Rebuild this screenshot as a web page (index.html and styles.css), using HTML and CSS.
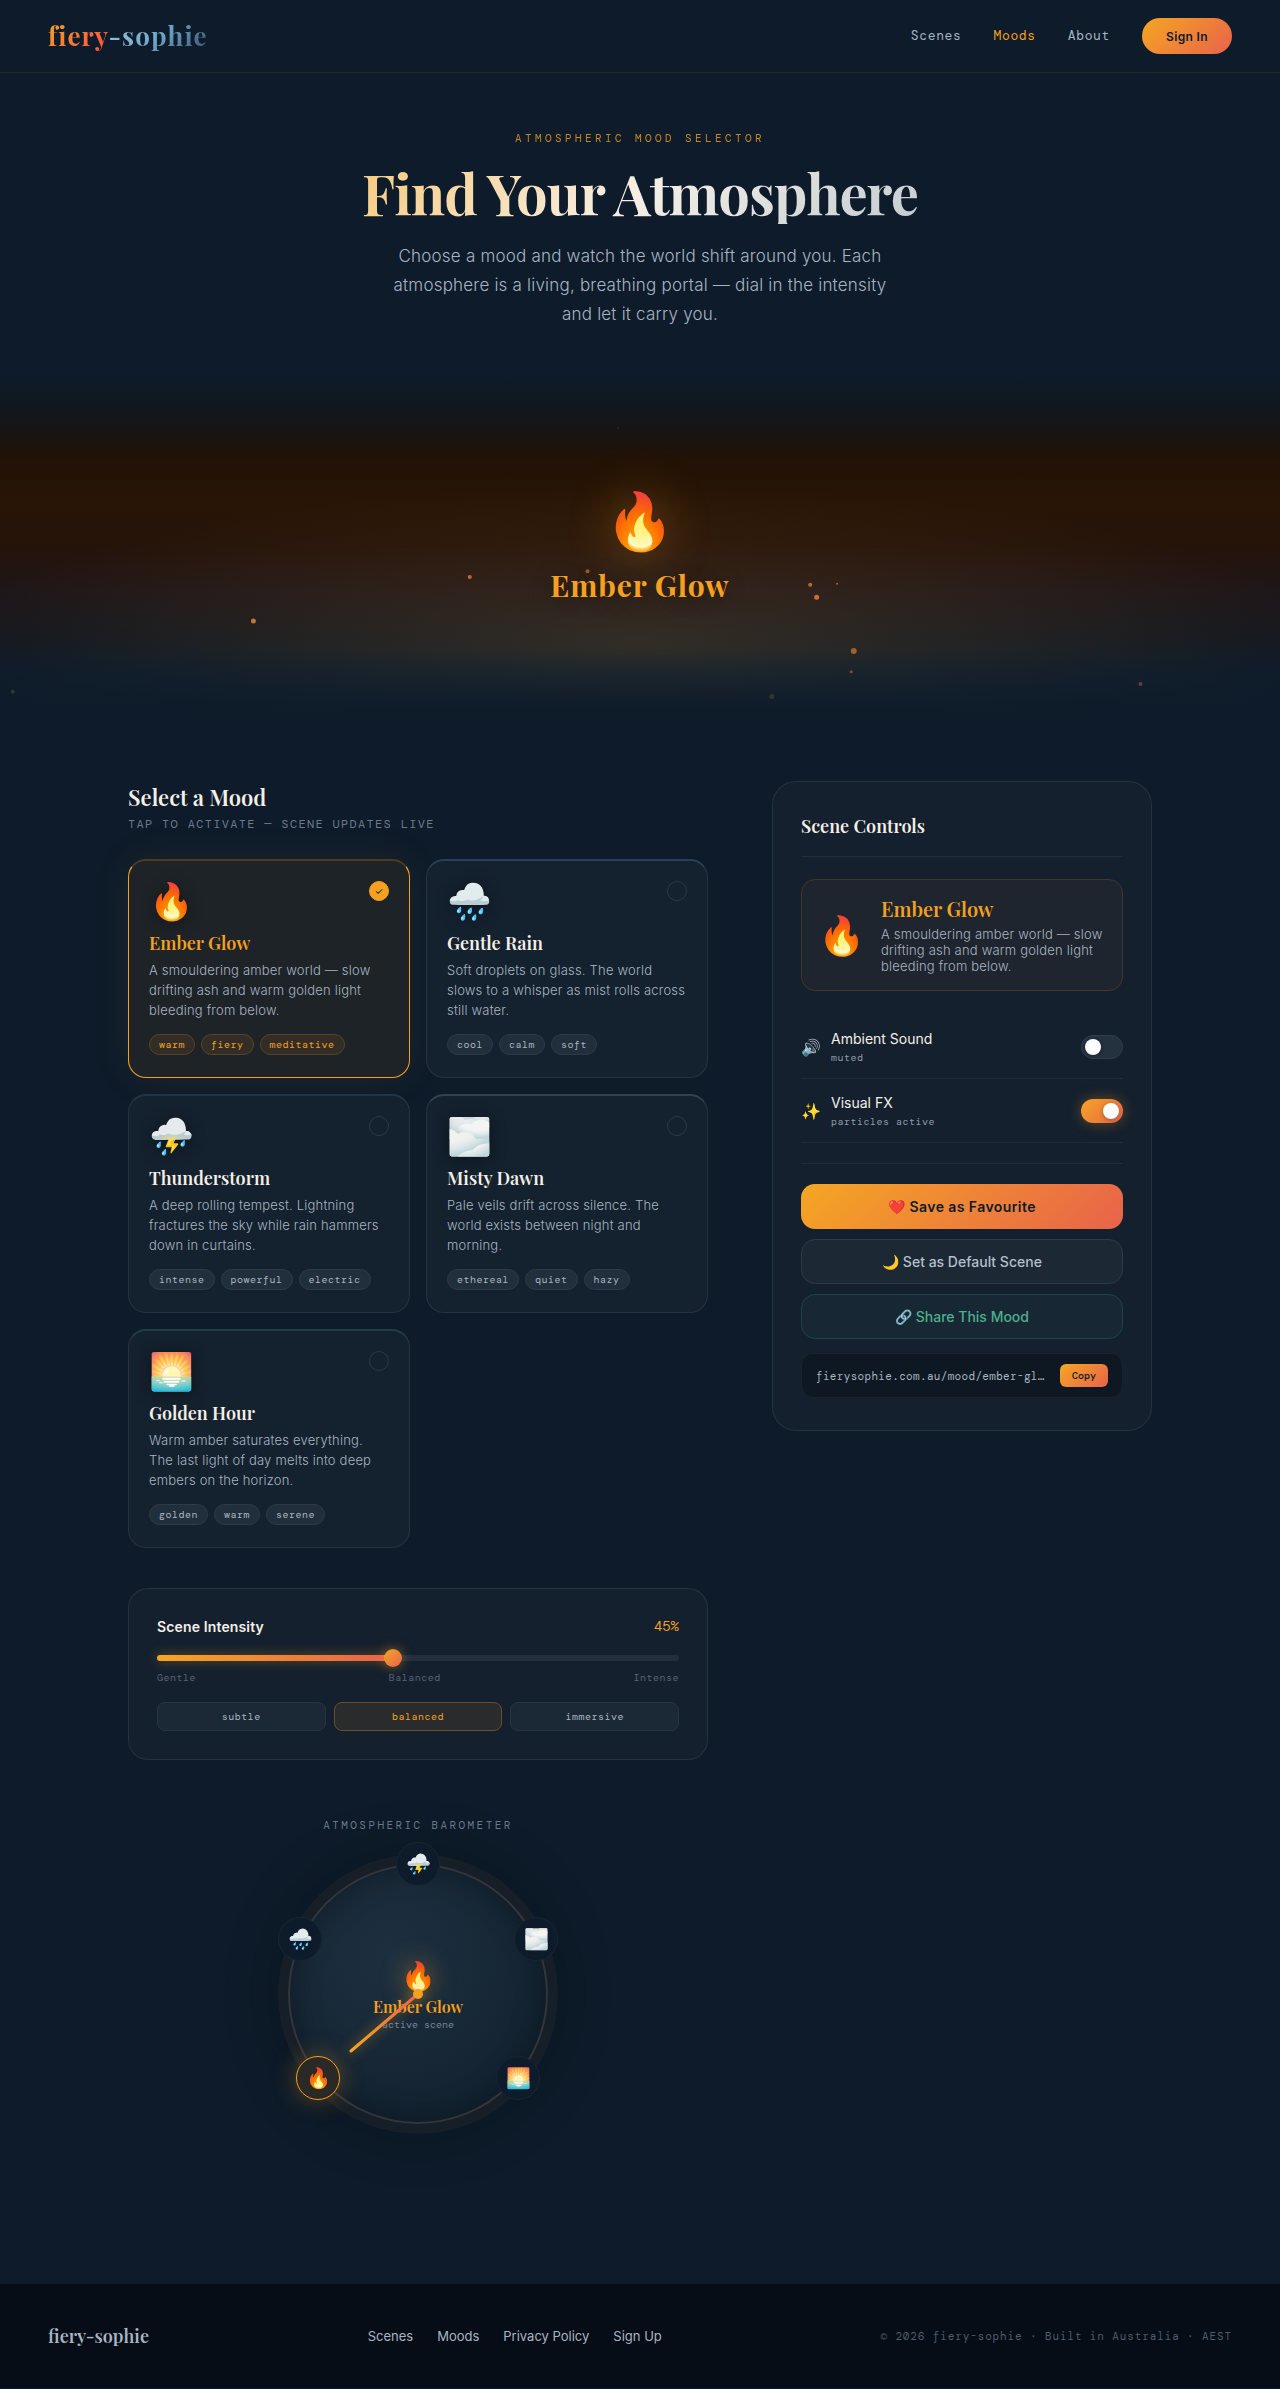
FILE: index.html
```html
<!DOCTYPE html>
<html lang="en-AU">
<head>
<meta charset="utf-8">
<meta name="viewport" content="width=device-width, initial-scale=1">
<title>fiery-sophie — Find Your Atmosphere</title>
<link rel="stylesheet" href="styles.css">
</head>
<body>
<header class="site-header">
  <a class="logo" href="#"><span class="logo-warm">fiery</span><span class="logo-cool">-sophie</span></a>
  <nav class="site-nav" aria-label="Main">
    <a href="#">Scenes</a>
    <a class="current" href="#" aria-current="page">Moods</a>
    <a href="#">About</a>
    <button class="sign-in" type="button">Sign In</button>
  </nav>
</header>

<section class="hero">
  <p class="eyebrow">Atmospheric Mood Selector</p>
  <h1>Find Your Atmosphere</h1>
  <p class="lede">Choose a mood and watch the world shift around you. Each atmosphere is a living, breathing portal — dial in the intensity and let it carry you.</p>
</section>

<section class="scene" aria-label="Ember Glow scene">
  <svg class="particles" aria-hidden="true">
    <circle cx="19.8%" cy="71.8%" r="2.5" fill="#c4743a"/>
    <circle cx="36.7%" cy="58.8%" r="2" fill="#c4692e"/>
    <circle cx="45.9%" cy="57.1%" r="2" fill="#a8561f"/>
    <circle cx="63.3%" cy="61.1%" r="2" fill="#b8692c"/>
    <circle cx="65.4%" cy="60.8%" r="1" fill="#b8602c"/>
    <circle cx="63.8%" cy="64.8%" r="2.5" fill="#c96d35"/>
    <circle cx="66.7%" cy="80.6%" r="3" fill="#9a6230"/>
    <circle cx="66.5%" cy="86.7%" r="1.5" fill="#7a4f36"/>
    <circle cx="89.1%" cy="90.3%" r="2" fill="#5c4432"/>
    <circle cx="60.3%" cy="94%" r="2.5" fill="#36332e"/>
    <circle cx="1%" cy="92.6%" r="2" fill="#33373a"/>
    <circle cx="48.3%" cy="15%" r="1" fill="#2a2420"/>
  </svg>
  <span class="scene-icon">🔥</span>
  <h2 class="scene-name">Ember Glow</h2>
</section>

<main class="layout">
  <div class="main-col">
    <h2 class="section-title">Select a Mood</h2>
    <p class="section-sub">Tap to activate — scene updates live</p>

    <div class="mood-grid">
      <article class="mood mood-ember is-active">
        <div class="mood-top"><span class="mood-icon">🔥</span><span class="mood-check">✓</span></div>
        <h3>Ember Glow</h3>
        <p>A smouldering amber world — slow drifting ash and warm golden light bleeding from below.</p>
        <ul class="tags"><li>warm</li><li>fiery</li><li>meditative</li></ul>
      </article>
      <article class="mood mood-rain">
        <div class="mood-top"><span class="mood-icon">🌧️</span><span class="mood-check"></span></div>
        <h3>Gentle Rain</h3>
        <p>Soft droplets on glass. The world slows to a whisper as mist rolls across still water.</p>
        <ul class="tags"><li>cool</li><li>calm</li><li>soft</li></ul>
      </article>
      <article class="mood mood-storm">
        <div class="mood-top"><span class="mood-icon">⛈️</span><span class="mood-check"></span></div>
        <h3>Thunderstorm</h3>
        <p>A deep rolling tempest. Lightning fractures the sky while rain hammers down in curtains.</p>
        <ul class="tags"><li>intense</li><li>powerful</li><li>electric</li></ul>
      </article>
      <article class="mood mood-mist">
        <div class="mood-top"><span class="mood-icon">🌫️</span><span class="mood-check"></span></div>
        <h3>Misty Dawn</h3>
        <p>Pale veils drift across silence. The world exists between night and morning.</p>
        <ul class="tags"><li>ethereal</li><li>quiet</li><li>hazy</li></ul>
      </article>
      <article class="mood mood-golden">
        <div class="mood-top"><span class="mood-icon">🌅</span><span class="mood-check"></span></div>
        <h3>Golden Hour</h3>
        <p>Warm amber saturates everything. The last light of day melts into deep embers on the horizon.</p>
        <ul class="tags"><li>golden</li><li>warm</li><li>serene</li></ul>
      </article>
    </div>

    <section class="intensity">
      <div class="intensity-head">
        <label for="intensity">Scene Intensity</label>
        <output for="intensity">45%</output>
      </div>
      <div class="slider">
        <div class="slider-track"><div class="slider-fill" style="width:45%"></div></div>
        <input id="intensity" type="range" min="0" max="100" value="45">
      </div>
      <div class="slider-labels"><span>Gentle</span><span>Balanced</span><span>Intense</span></div>
      <div class="presets">
        <button type="button">subtle</button>
        <button class="is-active" type="button">balanced</button>
        <button type="button">immersive</button>
      </div>
    </section>

    <section class="barometer">
      <h2 class="barometer-title">Atmospheric Barometer</h2>
      <div class="dial">
        <div class="dial-face">
          <span class="dial-icon">🔥</span>
          <span class="dial-name">Ember Glow</span>
          <span class="dial-note">active scene</span>
        </div>
        <svg class="needle" viewBox="0 0 260 260" aria-hidden="true">
          <defs>
            <linearGradient id="needle-fill" gradientUnits="userSpaceOnUse" x1="130" y1="130" x2="62" y2="187">
              <stop offset="0" stop-color="#e8634a"/><stop offset="1" stop-color="#f5a623"/>
            </linearGradient>
          </defs>
          <line x1="130" y1="130" x2="63" y2="187" stroke="url(#needle-fill)" stroke-width="3" stroke-linecap="round"/>
          <circle cx="130" cy="130" r="5" fill="#f5a020"/>
        </svg>
        <button class="node node-storm" type="button" aria-label="Thunderstorm">⛈️</button>
        <button class="node node-mist" type="button" aria-label="Misty Dawn">🌫️</button>
        <button class="node node-golden" type="button" aria-label="Golden Hour">🌅</button>
        <button class="node node-ember is-active" type="button" aria-label="Ember Glow">🔥</button>
        <button class="node node-rain" type="button" aria-label="Gentle Rain">🌧️</button>
      </div>
    </section>
  </div>

  <aside class="panel">
    <h2 class="panel-title">Scene Controls</h2>
    <div class="preview">
      <span class="preview-icon">🔥</span>
      <div>
        <h3>Ember Glow</h3>
        <p>A smouldering amber world — slow drifting ash and warm golden light bleeding from below.</p>
      </div>
    </div>
    <div class="toggles">
      <label class="toggle-row">
        <span class="toggle-icon">🔊</span>
        <span class="toggle-text"><span class="toggle-name">Ambient Sound</span><span class="toggle-state">muted</span></span>
        <input class="switch" type="checkbox" role="switch">
      </label>
      <label class="toggle-row">
        <span class="toggle-icon">✨</span>
        <span class="toggle-text"><span class="toggle-name">Visual FX</span><span class="toggle-state">particles active</span></span>
        <input class="switch" type="checkbox" role="switch" checked>
      </label>
    </div>
    <div class="actions">
      <button class="action action-save" type="button">❤️ Save as Favourite</button>
      <button class="action action-default" type="button">🌙 Set as Default Scene</button>
      <button class="action action-share" type="button">🔗 Share This Mood</button>
    </div>
    <div class="share-link">
      <span class="share-url">fierysophie.com.au/mood/ember-glow</span>
      <button type="button">Copy</button>
    </div>
  </aside>
</main>

<footer class="site-footer">
  <span class="footer-logo">fiery-sophie</span>
  <nav class="footer-nav" aria-label="Footer">
    <a href="#">Scenes</a><a href="#">Moods</a><a href="#">Privacy Policy</a><a href="#">Sign Up</a>
  </nav>
  <span class="footer-note">© 2026 fiery-sophie · Built in Australia · AEST</span>
</footer>
</body>
</html>
```
FILE: styles.css
```css
:root {
  --night: #0d1b2a;
  --amber: #f5a020;
  --coral: #e8634a;
  --cream: #f5efe6;
  --mist: #a8b5c2;
  --line: rgba(255, 255, 255, 0.08);
  --fire: linear-gradient(135deg, #f5a623, #e8634a);
  --display: "Playfair Display", "Liberation Serif", serif;
  --mono: "DM Mono", "Liberation Mono", monospace;
  --body: Inter, "Liberation Sans", sans-serif;
}

* { box-sizing: border-box; }

body, h1, h2, h3, p, ul { margin: 0; padding: 0; }

body {
  background: var(--night);
  color: var(--cream);
  font-family: var(--body);
  font-size: 16px;
  line-height: 24px;
}

a { color: inherit; text-decoration: none; }
button { font-family: inherit; cursor: pointer; }

/* Header */
.site-header {
  display: flex;
  align-items: center;
  justify-content: space-between;
  padding: 18px 48px;
  border-bottom: 1px solid rgba(245, 160, 32, 0.1);
}
.logo {
  font-family: var(--display);
  font-size: 26px;
  font-weight: 700;
  line-height: 36px;
  letter-spacing: 0.04em;
}
.logo-warm, .logo-cool {
  -webkit-background-clip: text;
  background-clip: text;
  color: transparent;
}
.logo-warm { background-image: linear-gradient(135deg, #f5a623, #ff5a3c 80%); }
.logo-cool { background-image: linear-gradient(135deg, #a8c5d4, #6fa8cc 50%, #3a506b); }
.site-nav {
  display: flex;
  align-items: center;
  gap: 32px;
  font-family: var(--mono);
  font-size: 13px;
  letter-spacing: 0.05em;
  color: var(--mist);
}
.site-nav .current { color: var(--amber); }
.sign-in {
  height: 36px;
  padding: 0 24px;
  border: 0;
  border-radius: 18px;
  background: var(--fire);
  color: var(--night);
  font-family: var(--body);
  font-size: 12px;
  font-weight: 600;
  letter-spacing: 0.03em;
}

/* Hero */
.hero {
  display: flex;
  flex-direction: column;
  align-items: center;
  padding: 56px 48px 48px;
  text-align: center;
}
.eyebrow {
  font-family: var(--mono);
  font-size: 11px;
  line-height: 18px;
  letter-spacing: 0.31em;
  text-transform: uppercase;
  color: var(--amber);
  opacity: 0.8;
}
h1 {
  margin: 15px 0 18px;
  font-family: var(--display);
  font-size: 56px;
  font-weight: 700;
  line-height: 62px;
  letter-spacing: -1px;
  background: linear-gradient(135deg, #f8c97c, #f5efe6 50%, #c4ccd2);
  -webkit-background-clip: text;
  background-clip: text;
  color: transparent;
}
.lede {
  max-width: 520px;
  font-size: 17px;
  font-weight: 300;
  line-height: 29px;
  letter-spacing: 0.012em;
  color: var(--mist);
}

/* Live scene */
.scene {
  position: relative;
  display: flex;
  flex-direction: column;
  align-items: center;
  justify-content: center;
  gap: 10px;
  min-height: 340px;
  padding-top: 2px;
  background:
    linear-gradient(transparent 80%, #0d1b2a 99%),
    radial-gradient(ellipse 54% 46% at 50% 78%, rgba(235, 170, 70, 0.14), transparent),
    linear-gradient(#0d1b2a, #171414 16%, #231205 25%, #281506 38%, #25130a 50%, #1e1618 63%, #14181f 76%, #0d1b2a 88%);
}
.particles { position: absolute; inset: 0; width: 100%; height: 100%; }
.scene-icon {
  position: relative;
  font-size: 56px;
  line-height: 64px;
  filter: drop-shadow(0 0 24px rgba(245, 160, 32, 0.35));
}
.scene-name {
  position: relative;
  font-family: var(--display);
  font-size: 30px;
  font-weight: 700;
  line-height: 44px;
  letter-spacing: 0.03em;
  color: var(--amber);
  text-shadow: 0 2px 20px rgba(0, 0, 0, 0.4);
}

/* Page columns */
.layout {
  display: grid;
  grid-template-columns: minmax(0, 1fr) 380px;
  gap: 64px;
  align-items: start;
  max-width: 1120px;
  margin: 0 auto;
  padding: 64px 48px 160px;
}
.section-title {
  font-family: var(--display);
  font-size: 22px;
  font-weight: 600;
  line-height: 32px;
}
.section-sub {
  margin: 2px 0 25px;
  font-family: var(--mono);
  font-size: 12px;
  line-height: 19px;
  letter-spacing: 0.11em;
  text-transform: uppercase;
  color: #6b7a89;
}

/* Mood cards */
.mood-grid {
  display: grid;
  grid-template-columns: 1fr 1fr;
  gap: 16px;
}
.mood {
  padding: 20px 20px 22px;
  border: 1px solid var(--line);
  border-top-width: 2px;
  border-radius: 18px;
  background: #14212e;
}
.mood-rain { border-top-color: #26415a; }
.mood-storm { border-top-color: #22344a; }
.mood-mist { border-top-color: #334150; }
.mood-golden { border-top-color: #1e4044; }
.mood.is-active {
  border-color: #4d3a22 var(--amber) var(--amber);
  background: #1e2328;
  box-shadow: 0 0 40px rgba(245, 160, 32, 0.08);
}
.mood-top { display: flex; justify-content: space-between; }
.mood-icon {
  font-size: 36px;
  line-height: 40px;
  filter: drop-shadow(0 2px 8px rgba(0, 0, 0, 0.4));
}
.mood-check {
  display: grid;
  place-items: center;
  width: 20px;
  height: 20px;
  border: 1px solid #2b3947;
  border-radius: 50%;
  font-size: 10px;
  line-height: 18px;
  color: var(--night);
}
.is-active .mood-check { border-color: var(--amber); background: var(--amber); }
.mood h3 {
  margin: 10px 0 5px;
  font-family: var(--display);
  font-size: 18px;
  font-weight: 600;
  line-height: 24px;
}
.mood.is-active h3 { color: var(--amber); }
.mood p, .preview p {
  font-size: 13px;
  font-weight: 300;
  line-height: 20px;
  letter-spacing: 0.015em;
  color: var(--mist);
}
.tags {
  display: flex;
  flex-wrap: wrap;
  gap: 6px;
  margin-top: 14px;
  list-style: none;
}
.tags li {
  padding: 3px 9px;
  border: 1px solid #2d3b48;
  border-radius: 11px;
  background: #212e3b;
  font-family: var(--mono);
  font-size: 10px;
  line-height: 13px;
  letter-spacing: 0.05em;
  color: var(--mist);
}
.is-active .tags li {
  border-color: #5c4423;
  background: #332d27;
  color: var(--amber);
}

/* Intensity */
.intensity {
  margin-top: 40px;
  padding: 28px;
  border: 1px solid var(--line);
  border-radius: 20px;
  background: #14202e;
}
.intensity-head {
  display: flex;
  justify-content: space-between;
  margin-bottom: 12px;
  font-size: 14px;
  line-height: 20px;
}
.intensity-head label { font-weight: 600; letter-spacing: 0.01em; }
.intensity-head output { font-family: var(--mono); line-height: 18px; color: var(--amber); }
.slider { display: grid; align-items: center; height: 18px; }
.slider > * { grid-area: 1 / 1; }
.slider-track { height: 6px; border-radius: 3px; background: #232f3c; }
.slider-fill {
  height: 6px;
  border-radius: 3px;
  background: linear-gradient(90deg, #f5a623, #e8634a);
  box-shadow: 0 0 12px rgba(245, 160, 32, 0.4);
}
.slider input {
  -webkit-appearance: none;
  appearance: none;
  width: 100%;
  height: 18px;
  margin: 0;
  background: transparent;
}
.slider input::-webkit-slider-thumb {
  -webkit-appearance: none;
  width: 18px;
  height: 18px;
  border-radius: 50%;
  background: var(--fire);
  box-shadow: 0 0 12px rgba(245, 160, 32, 0.5);
}
.slider-labels {
  display: flex;
  justify-content: space-between;
  margin: 3px 0 16px;
  font-family: var(--mono);
  font-size: 10px;
  line-height: 16px;
  letter-spacing: 0.05em;
  color: #566473;
}
.presets { display: grid; grid-template-columns: repeat(3, 1fr); gap: 8px; }
.presets button {
  padding: 6px 0;
  border: 1px solid #273442;
  border-radius: 8px;
  background: #1b2836;
  font-family: var(--mono);
  font-size: 10px;
  line-height: 15px;
  letter-spacing: 0.05em;
  color: var(--mist);
}
.presets .is-active { border-color: #6e4f25; background: #292b2c; color: var(--amber); }

/* Barometer */
.barometer {
  display: flex;
  flex-direction: column;
  align-items: center;
  margin-top: 56px;
}
.barometer-title {
  margin-bottom: 30px;
  font-family: var(--mono);
  font-size: 11px;
  font-weight: 400;
  line-height: 18px;
  letter-spacing: 0.22em;
  text-transform: uppercase;
  color: #6b7a89;
}
.dial { position: relative; width: 260px; height: 260px; }
.dial-face {
  display: flex;
  flex-direction: column;
  align-items: center;
  justify-content: center;
  height: 100%;
  border: 2px solid #34353a;
  border-radius: 50%;
  background: radial-gradient(circle at 40% 35%, #1e3040, #0e1d2b);
  box-shadow:
    0 0 0 10px #161f28,
    0 0 60px rgba(0, 0, 0, 0.35),
    inset 0 0 30px rgba(0, 0, 0, 0.3);
}
.dial-icon {
  font-size: 28px;
  line-height: 40px;
  filter: drop-shadow(0 0 12px rgba(245, 160, 32, 0.5));
}
.dial-name {
  font-family: var(--display);
  font-size: 16px;
  font-weight: 600;
  line-height: 22px;
  color: var(--amber);
}
.dial-note { font-family: var(--mono); font-size: 10px; line-height: 14px; color: #778592; }
.needle {
  position: absolute;
  inset: 0;
  overflow: visible;
  filter: drop-shadow(0 0 6px rgba(245, 160, 32, 0.6));
}
.node {
  position: absolute;
  width: 44px;
  height: 44px;
  padding: 0;
  border: 1px solid #182634;
  border-radius: 50%;
  background: var(--night);
  font-size: 20px;
  line-height: 42px;
  text-align: center;
  transform: translate(-50%, -50%);
}
.node.is-active {
  border-color: var(--amber);
  background: #2b2926;
  box-shadow: 0 0 24px rgba(245, 160, 32, 0.35);
}
.node-storm { left: 130px; top: 0; }
.node-mist { left: 248px; top: 75px; }
.node-golden { left: 230px; top: 214px; }
.node-ember { left: 30px; top: 214px; }
.node-rain { left: 12px; top: 75px; }

/* Controls panel */
.panel {
  padding: 32px 28px;
  border: 1px solid var(--line);
  border-radius: 24px;
  background: #14202e;
}
.panel-title {
  padding-bottom: 18px;
  border-bottom: 1px solid rgba(255, 255, 255, 0.06);
  font-family: var(--display);
  font-size: 18px;
  font-weight: 600;
  line-height: 24px;
}
.preview {
  display: flex;
  align-items: center;
  gap: 16px;
  margin: 22px 0 24px;
  padding: 16px;
  border: 1px solid #453725;
  border-radius: 14px;
  background: #1f252e;
}
.preview-icon { font-size: 38px; line-height: 44px; }
.preview h3 {
  margin-bottom: 4px;
  font-family: var(--display);
  font-size: 20px;
  font-weight: 600;
  line-height: 26px;
  color: var(--amber);
}
.preview p { line-height: 16px; }
.toggle-row {
  display: flex;
  align-items: center;
  gap: 10px;
  padding: 13px 0;
  border-bottom: 1px solid rgba(255, 255, 255, 0.05);
}
.toggle-icon { font-size: 16px; }
.toggle-text { display: flex; flex: 1; flex-direction: column; }
.toggle-name { font-size: 14px; line-height: 22px; }
.toggle-state {
  font-family: var(--mono);
  font-size: 10px;
  line-height: 15px;
  letter-spacing: 0.05em;
  color: #8f9ba8;
}
.switch {
  -webkit-appearance: none;
  appearance: none;
  display: flex;
  align-items: center;
  width: 42px;
  height: 24px;
  margin: 0;
  padding: 0 3px;
  border: 1px solid #303e4b;
  border-radius: 12px;
  background: #24313e;
}
.switch::before {
  content: "";
  width: 16px;
  height: 16px;
  border-radius: 50%;
  background: #fff;
  box-shadow: 0 1px 4px rgba(0, 0, 0, 0.3);
}
.switch:checked {
  justify-content: flex-end;
  border-color: transparent;
  background: var(--fire) border-box;
  box-shadow: 0 0 14px rgba(245, 160, 32, 0.35);
}
.actions {
  display: grid;
  gap: 10px;
  margin-top: 20px;
  padding-top: 20px;
  border-top: 1px solid rgba(255, 255, 255, 0.06);
}
.action {
  height: 45px;
  border: 1px solid #2d3b48;
  border-radius: 14px;
  background: #1c2935;
  font-size: 14px;
  font-weight: 500;
  color: #b4bfca;
}
.action-save {
  border-color: transparent;
  background: var(--fire) border-box;
  font-weight: 600;
  letter-spacing: 0.03em;
  color: var(--night);
}
.action-share { border-color: #1e4345; background: #172834; color: #4caf8c; }
.share-link {
  display: flex;
  align-items: center;
  gap: 12px;
  margin-top: 14px;
  padding: 10px 14px;
  border: 1px solid #18232d;
  border-radius: 12px;
  background: #0e1822;
}
.share-url {
  flex: 1;
  min-width: 0;
  overflow: hidden;
  text-overflow: ellipsis;
  white-space: nowrap;
  font-family: var(--mono);
  font-size: 11px;
  line-height: 22px;
  letter-spacing: 0.03em;
  color: var(--mist);
}
.share-link button {
  height: 23px;
  padding: 0 12px;
  border: 0;
  border-radius: 6px;
  background: var(--fire);
  font-family: var(--mono);
  font-size: 10px;
  font-weight: 500;
  color: var(--night);
}

/* Footer */
.site-footer {
  display: flex;
  align-items: center;
  justify-content: space-between;
  padding: 40px 48px;
  background: #060d17;
  color: var(--mist);
}
.footer-logo { font-family: var(--display); font-size: 18px; font-weight: 600; }
.footer-nav { display: flex; gap: 24px; font-size: 13px; }
.footer-note { font-family: var(--mono); font-size: 11px; letter-spacing: 0.08em; color: #4f5c69; }

@media (max-width: 960px) {
  .layout { grid-template-columns: minmax(0, 1fr); }
  .site-footer { flex-wrap: wrap; gap: 24px; }
}
```
